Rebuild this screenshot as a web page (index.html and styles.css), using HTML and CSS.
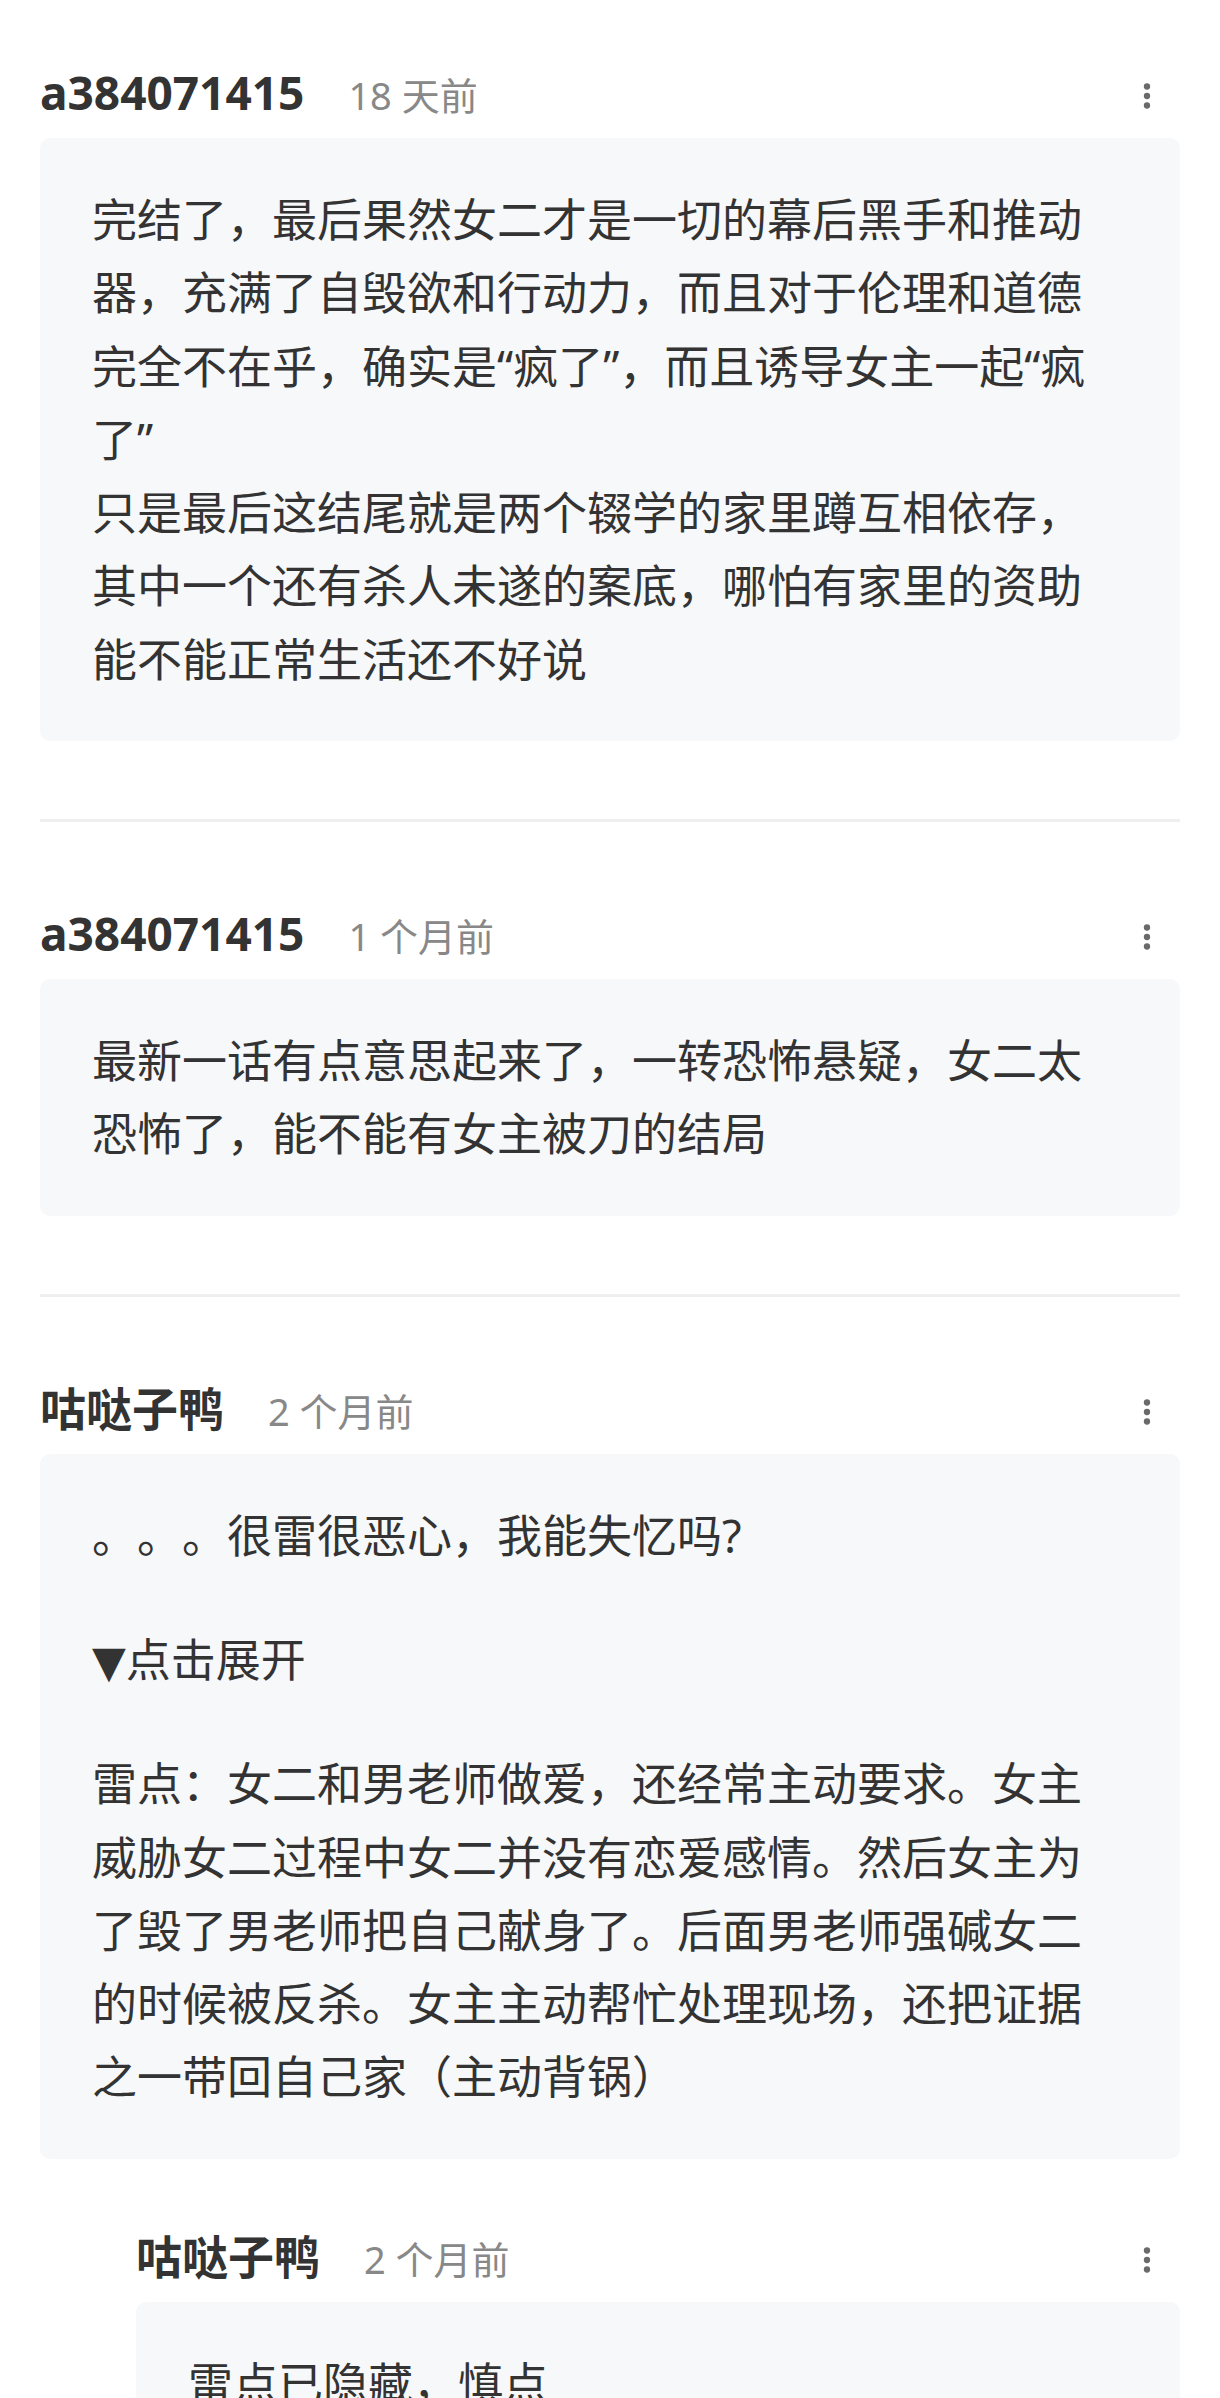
FILE: index.html
```html
<!doctype html>
<html>
<head>
<meta charset="utf-8">
<title>评论</title>
<link rel="stylesheet" href="styles.css">
</head>
<body>
<div class="comment">
  <div class="comment-head">
    <div class="comment-meta">
      <span class="user-name">a384071415</span><span class="comment-time">18 天前</span>
    </div>
    <svg class="more-btn" viewBox="0 0 24 24"><circle cx="12" cy="6" r="2"/><circle cx="12" cy="12" r="2"/><circle cx="12" cy="18" r="2"/></svg>
  </div>
  <div class="comment-body">
    <p>完结了，最后果然女二才是一切的幕后黑手和推动器，充满了自毁欲和行动力，而且对于伦理和道德完全不在乎，确实是“疯了”，而且诱导女主一起“疯了”<br>只是最后这结尾就是两个辍学的家里蹲互相依存，其中一个还有杀人未遂的案底，哪怕有家里的资助能不能正常生活还不好说</p>
  </div>
</div>
<hr class="divider">

<div class="comment">
  <div class="comment-head">
    <div class="comment-meta">
      <span class="user-name">a384071415</span><span class="comment-time">1 个月前</span>
    </div>
    <svg class="more-btn" viewBox="0 0 24 24"><circle cx="12" cy="6" r="2"/><circle cx="12" cy="12" r="2"/><circle cx="12" cy="18" r="2"/></svg>
  </div>
  <div class="comment-body">
    <p>最新一话有点意思起来了，一转恐怖悬疑，女二太恐怖了，能不能有女主被刀的结局</p>
  </div>
</div>
<hr class="divider">

<div class="comment">
  <div class="comment-head">
    <div class="comment-meta">
      <span class="user-name">咕哒子鸭</span><span class="comment-time">2 个月前</span>
    </div>
    <svg class="more-btn" viewBox="0 0 24 24"><circle cx="12" cy="6" r="2"/><circle cx="12" cy="12" r="2"/><circle cx="12" cy="18" r="2"/></svg>
  </div>
  <div class="comment-body">
    <p>。。。很雷很恶心，我能失忆吗?</p>
    <p><span class="fold-mark">▼</span>点击展开</p>
    <p>雷点：女二和男老师做爱，还经常主动要求。女主威胁女二过程中女二并没有恋爱感情。然后女主为了毁了男老师把自己献身了。后面男老师强碱女二的时候被反杀。女主主动帮忙处理现场，还把证据之一带回自己家（主动背锅）</p>
  </div>

  <div class="comment reply">
    <div class="comment-head">
      <div class="comment-meta">
        <span class="user-name">咕哒子鸭</span><span class="comment-time">2 个月前</span>
      </div>
      <svg class="more-btn" viewBox="0 0 24 24"><circle cx="12" cy="6" r="2"/><circle cx="12" cy="12" r="2"/><circle cx="12" cy="18" r="2"/></svg>
    </div>
    <div class="comment-body">
      <p>雷点已隐藏，慎点</p>
    </div>
  </div>
</div>
</body>
</html>
```

FILE: styles.css
```css
body {
  margin: 0;
  padding: 62px 40px 0;
  background: #fff;
  overflow: hidden;
  font-family: "Noto Sans", "Noto Sans CJK SC", sans-serif;
  color: #333;
  text-spacing-trim: space-all;
}
.comment-head {
  display: flex;
  align-items: center;
  height: 60px;
}
.comment-meta {
  flex: 1;
  display: flex;
  align-items: baseline;
  white-space: nowrap;
}
.user-name {
  font-size: 46px;
  line-height: 1;
  font-weight: 700;
  color: #333;
}
.comment-time {
  font-size: 38px;
  line-height: 1;
  color: #888;
  margin-left: 44px;
}
.more-btn {
  width: 38px;
  height: 38px;
  margin: 8px 14px 0 0;
  fill: #6a6a6a;
}
.comment-body {
  margin-top: 16px;
  background: #f7f8fa;
  border-radius: 10px;
  padding: 45px 66px 45px 52px;
  font-size: 45px;
  line-height: 73.3px;
  color: #333;
}
.comment-body p {
  margin: 0;
}
.comment-body p + p {
  margin-top: 51px;
}
.fold-mark {
  font-family: "DejaVu Sans", sans-serif;
  font-size: 44px;
  line-height: 1;
}
.divider {
  border: 0;
  height: 3px;
  background: #efefef;
  margin: 78px 0 81px;
}
.reply {
  margin-left: 96px;
  margin-top: 67px;
}
```
